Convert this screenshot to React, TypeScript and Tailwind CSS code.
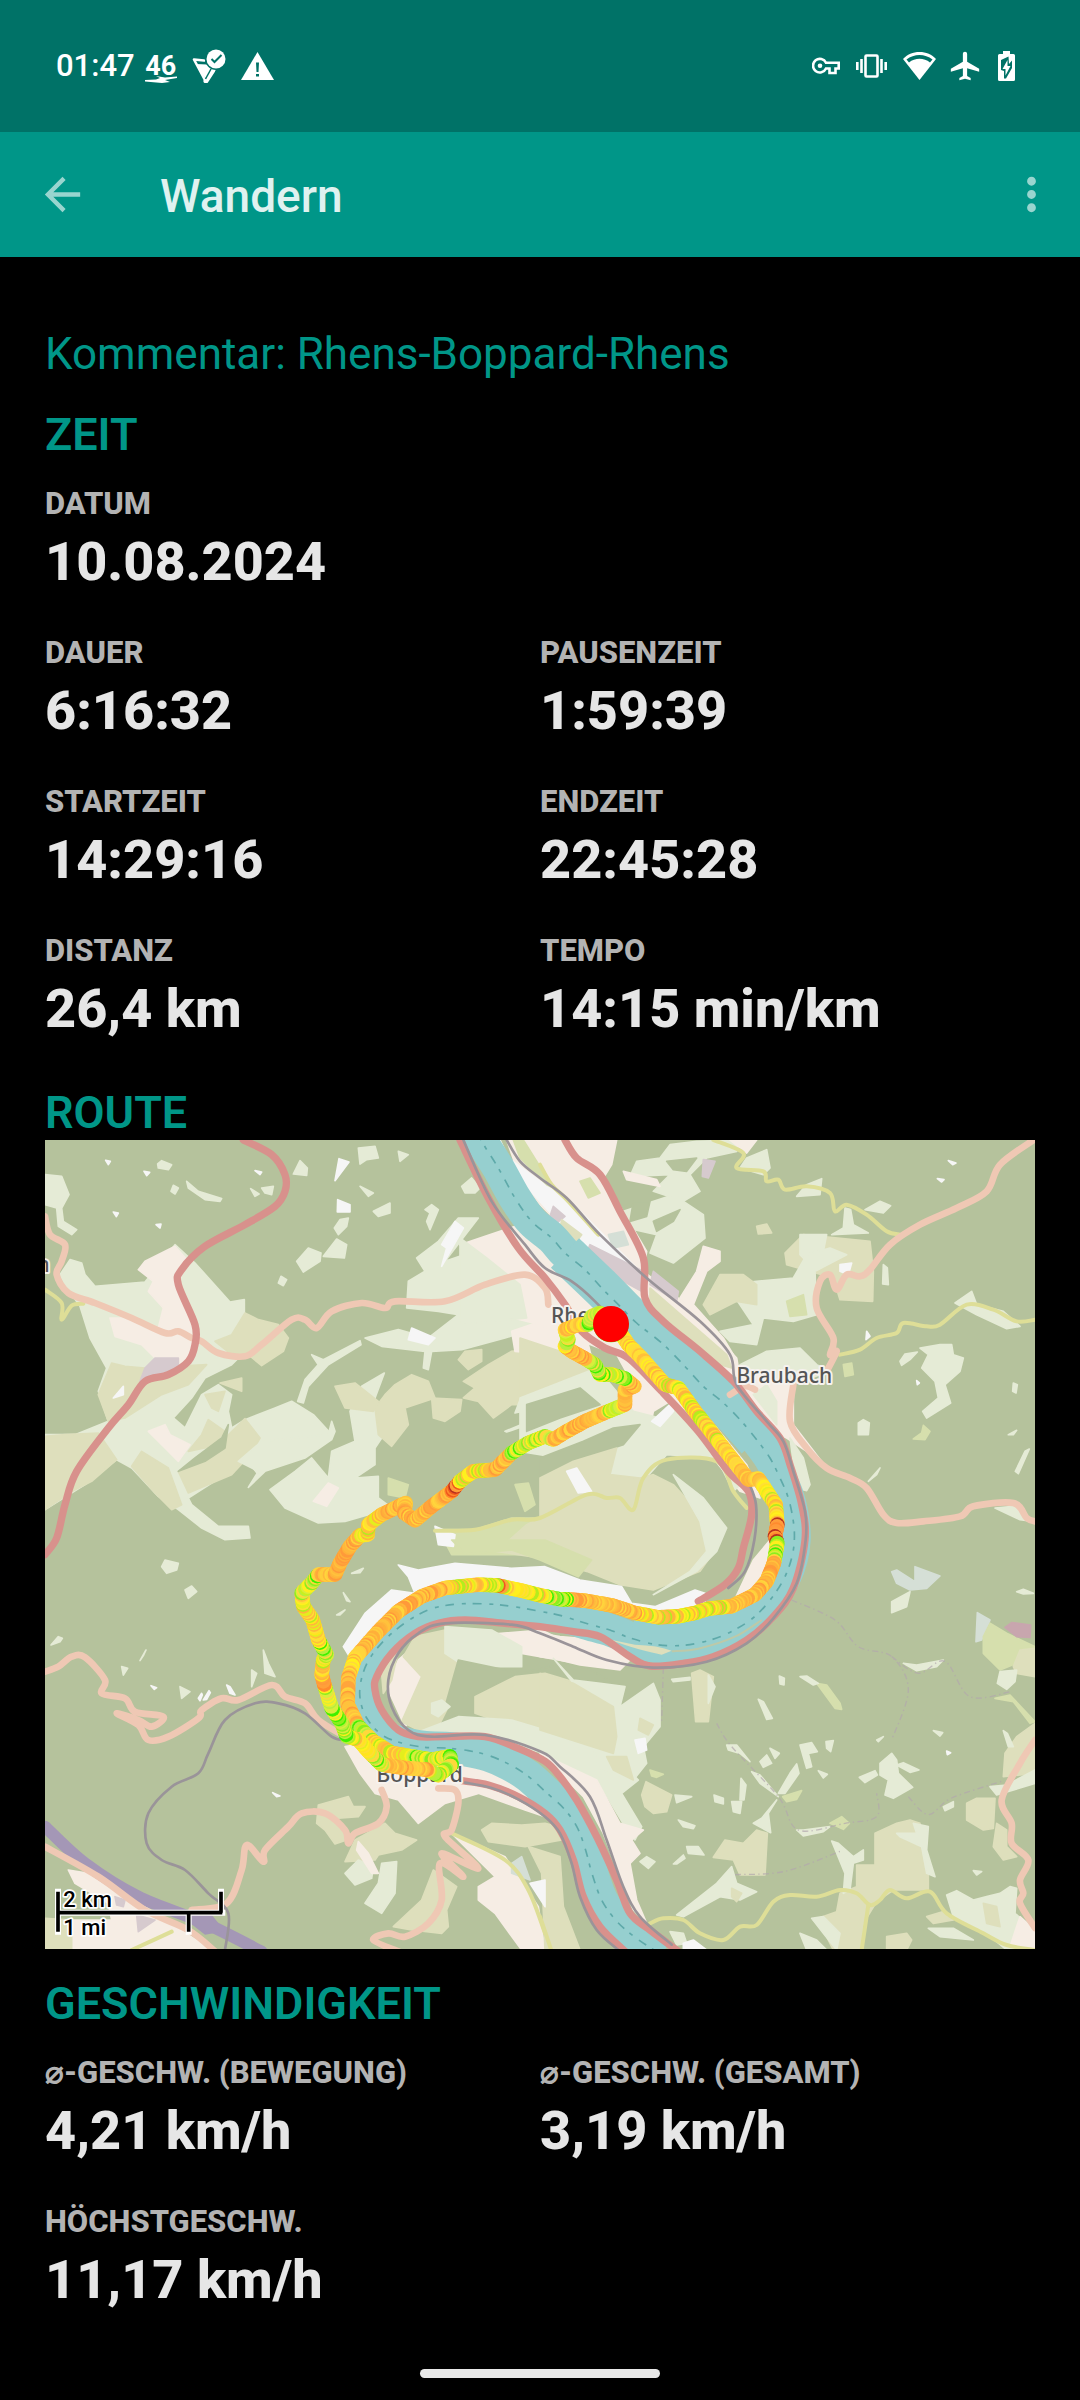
import React from "react";
import { MdArrowBack, MdMoreVert, MdAirplanemodeActive } from "react-icons/md";

type Pt = [number, number];

const toPoints = (s: string): Pt[] =>
  s.split(" ").map((p) => p.split(",").map(Number) as Pt);

// Catmull-Rom through the points, written as cubic beziers
const curve = (s: string) => {
  const p = toPoints(s);
  let d = `M${p[0][0]} ${p[0][1]}`;
  for (let i = 0; i < p.length - 1; i++) {
    const a = p[i - 1] || p[i];
    const b = p[i];
    const c = p[i + 1];
    const e = p[i + 2] || c;
    d += `C${b[0] + (c[0] - a[0]) / 6} ${b[1] + (c[1] - a[1]) / 6} ${c[0] - (e[0] - b[0]) / 6} ${c[1] - (e[1] - b[1]) / 6} ${c[0]} ${c[1]}`;
  }
  return d;
};

const COLORS = {
  grass: "#e5ebd6",
  farm: "#dedfbc",
  town: "#f6ede4",
  white: "#f6f6f6",
  industry: "#d6cace",
  meadow: "#d6dfad",
  pale: "#d5dfd6",
  forest: "#b5c29c",
  pink: "#c8a6ae",
};

type Area = [keyof typeof COLORS, string];
type Tile = { x: number; y: number; areas: Area[] };

const tiles: Tile[] = [
  {
    x: 0,
    y: 0,
    areas: [
      ["grass", "75,365 110,375 120,410 150,445 300,432 390,320 450,375 555,492 598,485 598,530 640,560 600,640 560,680 480,720 440,780 385,840 420,870 470,770 520,740 560,770 550,820 560,870 600,845 690,810 740,790 805,830 860,890 820,920 700,970 640,1010 600,960 540,1010 430,1080 440,1100 520,1165 610,1165 615,1200 540,1205 470,1170 400,1115 340,1075 260,990 215,965 120,1040 0,1115 0,890 90,890 190,850 160,760 185,690 135,600 105,505 60,440 45,410"],
      ["farm", "0,895 60,890 160,885 215,965 140,1030 90,1055 0,1115"],
      ["farm", "200,675 240,685 300,690 485,680 430,740 350,770 240,840 190,850 160,770"],
      ["farm", "600,842 645,900 620,945 560,1010 430,1065 400,1000 480,950 540,900"],
      ["farm", "490,845 540,880 500,925 430,940 470,890"],
      ["farm", "290,940 370,990 410,1100 380,1115 330,1065 260,985"],
      ["farm", "600,525 640,545 700,560 730,600 715,640 650,683 610,650 560,650 510,610 560,590"],
      ["farm", "480,770 540,760 520,820 500,810"],
      ["farm", "525,735 590,720 590,760"],
      ["forest", "400,1000 450,960 530,900 550,860 540,930 480,970"],
      ["town", "280,395 300,370 390,325 430,370 400,430 440,560 440,640 410,690 330,660 290,620 210,595 195,540 240,540 340,570 355,510 310,460 325,430"],
      ["town", "310,880 360,860 375,890 435,920 400,970 360,930"],
      ["industry", "330,660 400,660 400,700 330,720 285,730 300,690"],
      ["grass", "950,745 1018,705 990,780 1010,900 990,930 990,980 930,1020 1000,1015 1000,1080 1040,1110 900,1150 820,1155 720,1110 675,1055 750,1000 800,960 850,1020 860,940 930,910 915,820"],
      ["town", "850,1035 880,1050 845,1105 805,1090"],
      ["farm", "870,745 930,735 1000,790 985,820 900,810"],
      ["farm", "1050,740 1100,710 1150,730 1170,780 1080,810 1090,860 1040,925 1000,890 990,810 1020,770"],
      ["farm", "1160,780 1250,785 1245,820 1200,850 1165,840"],
      ["farm", "1255,730 1330,680 1400,640 1620,610 1640,690 1500,800 1400,800 1345,840 1300,790 1255,780 1290,750"],
      ["farm", "1240,665 1260,640 1310,635 1310,670 1270,695"],
      ["grass", "1450,720 1640,680 1560,790 1410,825"],
      ["grass", "1115,360 1180,310 1240,240 1300,240 1200,370 1310,332 1390,380 1500,440 1500,560 1380,600 1250,635 1160,640 1150,695 1135,690 1140,640 1010,625 960,600 1060,575 1150,600 1240,530 1180,520 1085,510 1090,430 1140,400"],
      ["farm", "1250,460 1330,400 1360,390 1360,430 1280,465"],
      ["white", "1190,320 1230,250 1255,270 1190,385 1205,330"],
      ["white", "1100,570 1170,600 1150,620 1090,605"],
      ["town", "1400,580 1500,545 1620,580 1640,660 1540,650 1410,640"],
      ["grass", "0,110 50,115 72,170 50,210 55,250 95,275 80,290 40,265 35,210 0,200"],
      ["grass", "940,30 990,25 1000,60 965,65 945,78"],
      ["grass", "765,68 787,90 785,112 745,108"],
      ["grass", "985,220 1035,195 1035,225 1000,235"],
      ["grass", "885,245 910,240 905,265 880,290 868,270"],
      ["grass", "875,303 905,320 898,360 835,355"],
      ["grass", "790,330 828,345 825,370 775,402 755,370"],
      ["grass", "425,130 460,160 530,182 525,190 480,185 430,150"],
      ["grass", "338,78 350,68 380,80 370,95 340,90"],
      ["grass", "1250,145 1280,120 1305,150 1290,165 1260,165"],
      ["grass", "945,145 985,165 970,175"],
      ["grass", "1060,40 1090,50 1065,70"],
      ["grass", "650,150 685,145 680,170 660,165"],
      ["grass", "617,152 642,168 630,175"],
      ["grass", "1345,295 1375,300 1415,360 1390,370 1340,310"],
      ["grass", "1160,200 1180,215 1155,275 1145,250 1155,225 1140,215"],
      ["grass", "708,415 725,425 715,443 700,435"],
      ["grass", "385,142 400,150 390,168 378,160"],
      ["grass", "800,650 835,665 945,608 948,620 850,680 790,745 775,795 758,790 780,725 820,680"],
      ["grass", "1380,880 1500,830 1500,842 1385,882"],
      ["grass", "580,970 650,910 850,890 860,850 870,880 860,905 780,960 660,1000 610,1048 640,1000"],
      ["white", "882,62 912,72 870,128"],
      ["white", "878,185 915,200 915,222 877,222"],
      ["white", "182,67 196,70 190,80"],
      ["white", "297,100 314,103 305,113"],
      ["white", "630,98 650,102 645,110"],
      ["white", "333,260 348,258 345,270"],
      ["white", "205,222 220,225 214,236"],
      ["white", "235,745 235,770 205,780"],
      ["meadow", "1030,1020 1090,1040 1080,1080 1030,1070"],
      ["meadow", "1180,1175 1290,1175 1400,1140 1640,1140 1640,1290 1480,1250 1220,1250"],
      ["meadow", "1410,1040 1450,1035 1470,1100 1440,1120"],
      ["white", "1170,1165 1230,1190 1225,1225 1180,1220"],
    ],
  },
  {
    x: 1485,
    y: 0,
    areas: [
      ["town", "-100,6 230,6 215,80 190,120 320,340 310,400 440,500 590,660 600,720 560,700 320,500 130,330 0,200 -60,120"],
      ["white", "-120,6 -95,60 0,130 100,200 300,400 280,420 110,310 0,190 -70,110"],
      ["meadow", "-80,6 -50,6 40,150 20,140 -60,60"],
      ["meadow", "120,130 150,120 180,165 145,180"],
      ["industry", "150,320 310,400 305,460 250,430 140,345"],
      ["industry", "340,400 415,460 410,490 330,440"],
      ["industry", "40,205 75,235 50,255 30,235"],
      ["farm", "65,245 125,290 110,310 60,275"],
      ["pale", "205,290 250,280 265,320 220,330"],
      ["farm", "330,450 560,650 575,690 540,680 330,500"],
      ["town", "-240,320 -60,260 0,330 140,450 280,580 440,760 620,980 660,1080 600,1060 430,850 390,790 340,820 330,870 260,860 280,740 230,650 100,600 0,560 -80,540"],
      ["grass", "-240,300 -160,360 -60,440 -40,540 -240,560"],
      ["farm", "-60,600 60,640 170,690 60,760 -60,780"],
      ["grass", "-60,780 170,690 280,820 360,840 400,790 620,1020 580,1060 530,960 380,950 300,1040 230,1070 140,1060 60,960 -60,940"],
      ["forest", "-40,800 120,750 180,800 60,840 -40,880"],
      ["forest", "0,960 130,910 220,870 300,860 250,920 100,970 0,1030"],
      ["white", "400,790 400,820 360,865 335,850"],
      ["farm", "0,1020 100,970 230,930 210,1010 300,1020 340,1010 400,1040 500,1150 530,1230 480,1300 340,1356 240,1340 140,1300 0,1260 -130,1240 -40,1160 0,1140"],
      ["white", "80,1000 110,990 155,1060 115,1065"],
      ["grass", "400,1010 490,1080 560,1170 530,1240 470,1300 340,1370 450,1300 500,1240 480,1150"],
      ["grass", "290,70 360,60 390,20 470,10 600,6 590,40 500,60 450,110 480,160 430,190 340,160 390,110 270,115"],
      ["grass", "250,220 400,170 490,230 495,300 400,375 330,345 350,290 260,270"],
      ["forest", "380,70 470,60 440,100 400,95"],
      ["forest", "280,190 330,190 320,235 270,250"],
      ["forest", "340,250 420,215 400,250 350,280"],
      ["grass", "620,60 680,35 690,90 670,110 600,90"],
      ["town", "250,100 350,125 360,145 260,125"],
      ["industry", "490,65 525,70 505,120 487,115"],
      ["town", "570,6 650,6 620,45"],
      ["farm", "735,345 790,290 990,310 1000,400 998,490 900,485 880,420 740,380"],
      ["grass", "780,290 860,290 850,340 800,370 780,350"],
      ["grass", "560,440 650,430 760,420 800,350 870,330 920,350 825,400 830,530 760,550 670,540 650,620 570,610 540,580 640,560"],
      ["meadow", "740,490 790,470 800,530 750,535"],
      ["town", "490,325 540,340 540,370 500,400 460,500 550,600 580,650 520,600 420,480 470,400"],
      ["farm", "540,410 610,410 650,440 650,500 590,490 510,530 490,500"],
      ["white", "900,380 935,375 925,410 900,400"],
      ["grass", "600,680 680,640 780,630 830,680 870,700 700,760 620,690"],
      ["town", "580,680 700,720 760,740 760,860 860,990 800,940 740,900 700,880 640,800"],
      ["grass", "640,770 680,740 710,790 710,860"],
      ["grass", "750,900 790,960 810,1040 800,1058 770,1050"],
      ["grass", "1140,630 1200,620 1235,620 1240,650 1270,660 1260,700 1215,740 1232,795 1160,840 1148,820 1195,780 1185,730 1145,690 1165,650"],
      ["grass", "1080,670 1095,648 1132,642 1110,665 1085,682"],
      ["grass", "955,855 970,845 988,855 985,890 955,890"],
      ["meadow", "1150,862 1170,880 1155,905 1120,903 1145,885"],
      ["grass", "1245,495 1295,460 1310,500 1390,520 1440,565 1400,572 1310,530"],
      ["grass", "975,215 1020,190 1052,203 1030,225"],
      ["grass", "800,140 845,122 840,170 770,175"],
      ["grass", "915,210 932,215 940,260 985,285 875,290 910,270"],
      ["grass", "1030,380 1042,390 1045,440 1028,438"],
      ["grass", "1455,940 1468,933 1435,1007 1426,1000"],
      ["grass", "1365,1110 1420,1105 1480,1150 1440,1145"],
      ["grass", "985,1030 1020,990 1010,1010"],
      ["grass", "1420,735 1432,740 1428,765 1418,760"],
      ["grass", "1405,890 1430,877 1420,890"],
      ["meadow", "910,680 935,675 940,710 915,715"],
      ["farm", "650,265 680,258 695,285 655,288"],
      ["white", "980,580 990,595 978,605"],
      ["white", "1225,68 1248,75 1238,80"],
      ["white", "1192,122 1212,125 1205,132"],
      ["white", "1130,728 1138,735 1132,740"],
    ],
  },
  {
    x: 0,
    y: 1206,
    areas: [
      ["meadow", "1220,0 1500,0 1640,60 1600,110 1485,60 1400,30 1260,42"],
      ["white", "1060,75 1120,90 1230,70 1400,85 1500,80 1605,120 1730,140 1760,190 1830,200 1950,150 1980,160 1980,220 1500,200 1200,170 1000,310 920,360 895,320 960,220 1040,150 1110,160 1090,110"],
      ["town", "1025,440 1060,360 1130,300 1490,270 1720,385 1600,370 1430,340 1200,420 1080,560"],
      ["farm", "1110,290 1200,270 1250,350 1240,440 1180,560 1130,575 1070,545 1130,410 1075,350"],
      ["grass", "1200,260 1340,270 1430,320 1430,380 1260,380 1200,340"],
      ["farm", "1010,400 1060,330 1040,420 1015,460"],
      ["forest", "1240,360 1430,400 1560,370 1640,390 1720,440 1600,430 1410,400 1290,470 1290,520 1400,540 1240,535 1200,500"],
      ["farm", "1290,470 1410,410 1500,400 1600,430 1700,500 1715,600 1690,650 1500,590 1290,520"],
      ["grass", "1160,490 1190,480 1215,500 1180,530 1160,520"],
      ["grass", "1110,580 1240,530 1400,540 1500,570 1700,640 1780,720 1730,760 1790,860 1770,900 1740,860 1680,760 1500,640 1300,590"],
      ["town", "900,620 960,610 1040,640 1240,650 1390,690 1500,790 1500,830 1440,810 1300,760 1200,790 1120,850 1060,780 990,760 945,700"],
      ["grass", "1010,970 1055,965 1050,1060 1010,1120 960,1090 1000,1030"],
      ["farm", "820,795 910,770 925,800 960,800 940,830 870,835 900,870 905,900 870,912 840,870 815,850"],
      ["farm", "930,900 1020,850 1050,880 1115,900 1070,930 1000,945 990,960 900,965"],
      ["grass", "900,1000 940,960 985,980 980,1015 930,1035"],
      ["town", "940,905 970,940 1000,1000 980,1000 935,930"],
      ["farm", "1165,990 1235,1040 1205,1110 1210,1160 1190,1180 1100,1170 1045,1160 1130,1080"],
      ["town", "1220,880 1380,950 1480,1100 1500,1230 1430,1230 1350,1120 1300,1080 1300,1040 1350,1010 1320,980"],
      ["farm", "1310,870 1340,850 1430,855 1500,850 1620,880 1550,900 1440,920 1330,905"],
      ["pale", "1400,970 1430,950 1455,1020 1400,1000"],
      ["farm", "1450,920 1545,950 1555,1100 1605,1230 1500,1230 1490,1000"],
      ["white", "1455,1030 1500,1020 1500,1100"],
      ["town", "70,990 130,1000 300,1100 500,1230 0,1230 0,1140 200,1140 190,1090 90,1030"],
      ["farm", "0,1135 80,1140 80,1230 0,1230"],
      ["industry", "210,1070 240,1080 235,1100 215,1095"],
      ["industry", "275,1125 330,1140 280,1175"],
      ["grass", "360,60 400,70 395,90 365,100 350,80"],
      ["grass", "420,150 440,138 455,155 430,175"],
      ["grass", "18,315 40,290 52,295 45,305"],
      ["grass", "405,440 435,455 410,475"],
      ["grass", "230,380 248,385 235,405"],
      ["grass", "655,330 670,370 690,410 660,400"],
      ["grass", "620,390 635,400 620,440"],
      ["grass", "895,158 915,185 905,182"],
      ["grass", "920,100 955,85 945,98"],
      ["grass", "875,225 900,210 885,225"],
      ["grass", "285,362 303,330 296,345"],
      ["white", "545,435 555,440 570,465 555,460"],
      ["white", "460,475 470,460 472,465 465,482"],
      ["white", "475,480 492,452 496,458 485,478"],
      ["white", "683,758 705,768 695,770"],
      ["white", "318,437 335,443 328,448"],
    ],
  },
  {
    x: 1485,
    y: 1206,
    areas: [
      ["town", "560,230 640,60 690,0 700,60 640,170 540,215"],
      ["town", "0,280 60,290 180,300 270,360 240,390 120,375 40,355 0,350"],
      ["grass", "40,355 100,420 180,430 255,440 240,500 340,430 360,480 360,560 310,620 320,670 280,720 180,690 100,430"],
      ["farm", "0,400 100,430 220,500 230,590 220,640 0,570"],
      ["farm", "200,650 260,650 280,720 220,690"],
      ["farm", "300,535 340,555 325,585 295,570"],
      ["white", "285,600 315,595 320,630 295,640"],
      ["town", "0,640 170,720 240,850 310,870 275,900 300,940 270,970 290,1080 320,1150 280,1110 190,880 130,770"],
      ["pale", "1055,95 1070,90 1125,125 1125,80 1200,108 1160,145 1110,150 1070,130"],
      ["grass", "1055,185 1110,155 1100,200 1055,218"],
      ["grass", "1030,590 1010,600 1015,605"],
      ["pale", "1312,218 1350,240 1325,300 1308,305"],
      ["meadow", "1350,250 1400,280 1485,320 1430,370 1380,390 1330,340 1330,290"],
      ["pink", "1395,262 1415,248 1472,255 1470,292 1430,290"],
      ["farm", "1440,330 1485,325 1485,410 1430,400 1420,380"],
      ["grass", "1380,395 1430,390 1425,425 1400,448 1372,430"],
      ["meadow", "1365,475 1410,465 1485,545 1470,550 1420,485"],
      ["meadow", "830,430 860,435 900,490 905,508 885,505"],
      ["grass", "780,410 800,408 835,430 820,435"],
      ["grass", "655,478 670,485 697,535 680,538"],
      ["grass", "718,408 733,415 732,435 720,432"],
      ["farm", "455,400 480,390 520,410 505,545 467,545"],
      ["grass", "505,405 525,440 505,490"],
      ["grass", "395,418 450,412 450,420 400,425"],
      ["grass", "560,615 590,615 630,665 600,640 565,630"],
      ["grass", "780,615 815,608 832,635 805,640 815,680 800,685 790,650"],
      ["grass", "858,605 880,602 872,635 860,625"],
      ["grass", "690,625 718,640 705,655"],
      ["grass", "660,665 680,645 695,670 670,682"],
      ["grass", "770,672 777,700 735,760 715,760 750,700"],
      ["grass", "635,695 660,705 715,770 660,730"],
      ["grass", "1020,670 1055,640 1070,660 1075,700 1118,742 1060,775 1035,765 1045,720 1020,705"],
      ["grass", "1070,675 1090,668 1137,690 1110,697"],
      ["grass", "958,712 1005,692 1012,705 975,728"],
      ["grass", "835,692 862,703 850,714"],
      ["meadow", "728,770 785,752 770,778 740,785"],
      ["meadow", "330,690 370,703 350,712 335,708"],
      ["farm", "318,725 395,765 380,815 340,820 315,800 305,765"],
      ["grass", "405,765 455,770 410,788"],
      ["grass", "522,765 550,775 550,792 525,785"],
      ["grass", "575,785 605,785 600,820 580,815"],
      ["grass", "603,715 618,735 612,780 600,780"],
      ["grass", "710,780 685,820 692,878 640,850 665,835"],
      ["grass", "415,840 465,857 460,866 430,860"],
      ["farm", "555,900 610,910 650,870 682,880 675,1005 600,1005 580,960 520,952"],
      ["grass", "440,920 475,920 492,945 445,940"],
      ["grass", "400,972 430,945 435,955 410,972"],
      ["grass", "300,965 320,950 345,965 325,985"],
      ["grass", "575,980 590,1030 650,1055 600,1080 540,1070 430,1130 410,1125 530,1030"],
      ["farm", "575,1045 605,1060 590,1085 575,1070"],
      ["farm", "1005,880 1070,850 1110,840 1140,850 1130,900 1165,960 1165,1050 1060,1050 1010,1085 970,1150 960,1230 880,1230 850,1170 820,1140 890,1115 900,1060 950,1040 950,975 1005,975"],
      ["grass", "1120,850 1165,860 1160,930 1185,1010 1160,1000 1145,920 1080,890 1070,880 1130,880"],
      ["grass", "875,903 895,910 940,950 970,930 970,960 940,970 930,1050 910,1060 915,1000"],
      ["grass", "770,870 790,870 870,860 850,875 790,888"],
      ["meadow", "870,850 905,830 928,850 910,868"],
      ["grass", "815,1135 850,1130 900,1180 890,1230 850,1180"],
      ["grass", "780,1180 830,1200 860,1230 800,1230"],
      ["farm", "1040,1190 1100,1180 1115,1200 1100,1230 1040,1230"],
      ["grass", "390,1175 430,1180 440,1210 410,1215"],
      ["white", "430,1210 460,1200 500,1230 430,1230"],
      ["farm", "1280,790 1310,775 1365,775 1360,865 1330,870 1280,840"],
      ["farm", "1370,850 1400,870 1400,920 1430,950 1390,960 1360,920"],
      ["farm", "1485,550 1485,700 1390,710 1395,640 1430,590"],
      ["grass", "1350,740 1400,735 1485,690 1485,730 1370,765"],
      ["grass", "1210,800 1240,785 1240,800 1215,812"],
      ["grass", "1220,1065 1250,1052 1300,1080 1340,1070 1380,1060 1410,1040 1430,1045 1425,1120 1485,1175 1485,1230 1400,1230 1340,1180 1240,1130"],
      ["farm", "1160,1130 1210,1115 1240,1140 1180,1150"],
      ["grass", "1165,1165 1240,1165 1300,1200 1200,1190"],
      ["farm", "1330,1090 1370,1100 1380,1160 1340,1150"],
      ["town", "1440,1130 1485,1170 1485,1230 1410,1220"],
      ["grass", "1090,370 1130,375 1210,360 1190,380 1130,392"],
      ["grass", "1430,155 1450,148 1480,160 1450,162"],
      ["grass", "1180,572 1208,578 1200,588"],
      ["grass", "1390,572 1402,580 1420,620 1405,620"],
      ["white", "1220,633 1232,638 1222,644"],
      ["grass", "1300,992 1325,995 1310,1005"],
    ],
  },
];

const RIVER =
  "1260,-90 1308,6 1360,90 1410,180 1460,250 1520,300 1560,345 1620,395 1670,450 1720,500 1775,555 1850,615 1915,680 1975,745 2030,790 2085,845 2135,905 2175,960 2205,1020 2230,1080 2245,1150 2248,1206 2240,1260 2218,1320 2180,1380 2130,1435 2070,1475 2000,1505 1915,1522 1835,1520 1755,1500 1700,1478 1620,1455 1545,1432 1485,1420 1400,1405 1330,1398 1240,1398 1160,1412 1090,1448 1025,1500 975,1560 950,1620 945,1680 965,1740 1010,1790 1070,1815 1140,1828 1200,1830 1270,1838 1330,1852 1395,1880 1450,1915 1500,1960 1555,2010 1595,2065 1620,2130 1642,2210 1672,2290 1720,2355 1780,2405 1850,2450";

const primary = [
  "595,6 680,50 720,110 720,160 690,205 600,260 480,325 410,395 400,440 450,560 450,620 430,670 370,710 300,730 250,800 190,870 95,1000 60,1100 35,1200 0,1250",
  "1245,6 1330,180 1420,330 1500,420 1560,500 1610,580 1680,630 1750,660 1850,760 1960,880 2050,1000 2110,1060 2120,1130 2095,1230 2080,1290 2040,1340 1960,1390",
  "1560,6 1595,60 1665,110 1725,220 1795,360 1800,480 1855,550 1965,640 2065,730 2135,820 2205,900 2235,980 2270,1100 2280,1206 2245,1350 2185,1436 2105,1506 2005,1556 1915,1576 1815,1584 1755,1556 1665,1496 1585,1481 1485,1466 1380,1456 1260,1446 1180,1456 1110,1486 1040,1546 995,1616 990,1656 1010,1716 1060,1776 1120,1796 1200,1796 1320,1796 1420,1831 1500,1870 1545,1916 1595,1986 1655,2096 1715,2226 1755,2326 1815,2376 1900,2440",
  "1250,1928 1330,1941 1420,1976 1500,2026 1545,2076 1585,2166 1615,2276 1665,2366 1740,2440",
];

const secondary = [
  "0,235 15,290 60,320 50,370 35,410 70,465 150,495 260,540 360,585 400,580 440,600 470,610 520,645 600,655 650,620 740,545 780,545 815,570 860,520 950,495 1020,510 1050,490 1200,490 1320,440 1440,410 1500,450 1510,500",
  "2965,6 2865,80 2825,160 2735,210 2625,260 2535,320 2475,395 2445,415 2405,410 2375,455 2355,410 2325,430 2315,510 2365,600 2355,650 2375,640 2345,700",
  "2245,740 2235,850 2285,930 2345,990 2415,1020 2465,1050 2515,1130 2555,1155 2635,1150 2745,1135 2785,1105 2905,1095 2945,1140 2970,1150",
  "0,1601 40,1586 80,1556 120,1558 180,1626 170,1666 240,1681 270,1721 355,1736 320,1766 280,1746 215,1726 280,1761 310,1806 370,1796 460,1741 470,1716 530,1681 580,1686 680,1641 720,1676 780,1696 820,1746 900,1796",
  "1010,1956 1025,2006 1000,2056 930,2086 910,2116 900,2076 840,2026 770,2026 730,2066 660,2136 655,2171 605,2121 590,2196 545,2296 440,2316",
  "1180,1951 1230,1956 1240,1996 1220,2076 1200,2096 1300,2191 1190,2146 1255,2216 1185,2176 1190,2286 1150,2356 1080,2396 1030,2386 985,2406 1060,2440",
  "0,2126 160,2216 300,2316 430,2376 510,2440",
  "2970,1806 2925,1876 2870,1986 2900,2056 2900,2116 2950,2166 2925,2226 2935,2266 2925,2296 2970,2370",
  "2055,770 2100,745 2130,755",
];

const tertiary = [
  "0,455 50,495 50,545 80,503 115,497",
  "2005,6 2095,45 2075,90 2155,100 2165,130 2200,125 2220,155 2285,145 2355,165 2370,220 2405,200 2465,230 2525,280 2565,290",
  "2385,650 2445,635 2495,600 2555,585 2575,555 2645,565 2685,560 2765,500 2845,515 2915,550 2970,545",
  "1170,1178 1290,1175 1400,1145 1485,1140 1625,1070 1685,1080 1725,1080 1765,1115 1795,1020 1865,965 2015,970 2065,1060 2105,1110",
  "1485,80 1520,140 1570,190 1660,290",
  "1220,2086 1380,2166 1450,2256 1500,2386",
  "260,2436 380,2381",
  "1815,2356 1855,2341 1915,2346 1965,2386 2035,2406 2085,2366 2135,2361 2185,2291 2235,2271 2315,2276 2385,2256 2435,2266 2475,2301 2505,2286 2535,2256 2585,2281 2655,2261 2705,2326 2815,2386 2885,2421 2970,2436",
  "2470,2301 2450,2436",
  "1485,2336 1520,2440",
];

const rails = [
  "1255,6 1340,190 1440,320 1500,390 1580,430 1650,490 1780,630 1850,750",
  "2110,1030 2133,1100 2128,1206 2100,1300 2050,1350",
  "1385,6 1425,70 1485,120 1565,180 1665,290 1805,420 1965,550 2055,650 2075,740 2165,850 2215,910 2245,1000 2280,1120 2282,1206 2255,1336 2185,1441 2105,1516 1985,1571 1825,1589 1685,1566 1585,1526 1485,1486 1400,1460 1200,1456 1120,1486 1060,1546 1030,1626 1040,1706 1090,1776 1160,1796 1320,1791 1485,1840 1545,1886 1635,1976 1685,2106 1735,2246 1785,2336 1880,2420",
  "900,1806 860,1796 780,1726 700,1696 630,1696 540,1746 490,1846 460,1906 380,1946 310,2026 305,2116 350,2166 420,2196 490,2266 550,2326 540,2436",
  "1260,1934 1340,1950 1420,1984 1500,2036 1545,2086 1580,2176 1605,2276 1655,2376 1725,2440",
];

const paths = [
  "2240,1386 2370,1446 2440,1526 2540,1556 2590,1656 2540,1806",
  "2540,1556 2620,1606 2700,1570 2775,1676 2900,1660",
  "2015,1756 2060,1826 2200,1976 2260,2076 2400,2056 2495,2036 2495,1966",
  "2070,2210 2220,2200 2385,2140",
  "2590,1976 2650,2030 2720,1980 2870,1930",
  "1860,590 2010,720",
  "1855,1590 1850,1750",
];

// pace along the recorded track: o = slow, y = normal, g = fast, m = mixed, r = almost standing
const track: [string, string][] = [
  ["y", "1720,575 1750,620 1790,660 1860,740"],
  ["m", "1860,740 1900,750 1950,820 1990,870 2020,910"],
  ["y", "2020,910 2055,955 2110,1025 2140,1022 2165,1060"],
  ["m", "2165,1060 2192,1100 2197,1160"],
  ["r", "2197,1160 2190,1195 2197,1215"],
  ["g", "2197,1215 2193,1240 2187,1275"],
  ["o", "2187,1275 2165,1330 2130,1370 2060,1405"],
  ["m", "2060,1405 1990,1412 1950,1425 1900,1435 1840,1438 1770,1425"],
  ["o", "1770,1425 1700,1402 1620,1388 1565,1384"],
  ["g", "1565,1384 1545,1384 1485,1372"],
  ["m", "1485,1372 1430,1358 1370,1345"],
  ["r", "1370,1345 1355,1342"],
  ["m", "1355,1342 1300,1340 1200,1350"],
  ["o", "1200,1350 1130,1375 1060,1420 1000,1480 930,1560"],
  ["y", "930,1560 910,1620"],
  ["o", "910,1620 908,1700 940,1765"],
  ["g", "940,1765 985,1810"],
  ["m", "985,1810 1040,1845 1100,1855"],
  ["g", "1100,1855 1160,1865 1215,1855 1220,1880 1180,1912 1145,1895"],
  ["o", "1145,1895 1080,1890 1010,1880"],
  ["g", "1010,1880 970,1840"],
  ["m", "970,1840 940,1805 905,1795"],
  ["g", "905,1795 890,1755 860,1710 838,1640"],
  ["r", "838,1640 830,1610"],
  ["m", "830,1610 835,1565 845,1550"],
  ["g", "845,1550 820,1505"],
  ["m", "820,1505 803,1445 775,1405 770,1365"],
  ["g", "770,1365 800,1335 820,1310"],
  ["o", "820,1310 870,1310 885,1275 915,1225 945,1192"],
  ["m", "945,1192 968,1190 970,1160 1010,1130"],
  ["o", "1010,1130 1082,1095 1078,1125 1110,1147 1160,1105 1220,1060"],
  ["r", "1220,1060 1245,1030"],
  ["m", "1245,1030 1285,1000 1350,995"],
  ["o", "1350,995 1400,945"],
  ["g", "1400,945 1450,915 1500,895 1525,905"],
  ["o", "1525,905 1560,883 1620,850 1690,820"],
  ["g", "1690,820 1740,800"],
  ["o", "1740,800 1740,755 1768,745 1740,722"],
  ["g", "1740,722 1700,710 1665,710 1650,680 1620,662"],
  ["o", "1620,662 1580,640 1560,625"],
  ["g", "1560,625 1570,605 1560,575"],
  ["y", "1560,575 1600,560 1630,560"],
  ["g", "1630,560 1640,535 1665,525 1690,540"],
];

const PALETTE: Record<string, string[]> = {
  y: ["#ffc83c", "#ffc03a", "#ffdf35", "#fff01e", "#ffb53c", "#ffd83c"],
  o: ["#ffb03a", "#ffa53c", "#ffc23c", "#ffd53c", "#ff9a3a", "#ffb83c", "#ffce3c"],
  g: ["#c8f01e", "#8cee1e", "#ffee1e", "#d8ee3c", "#3ef000", "#b8ee3c", "#ffd83c"],
  m: ["#ffe51e", "#ffc03a", "#ffb53c", "#e4ee1e", "#ffdf35", "#fff01e", "#b4ec1e"],
  r: ["#ff9a3a", "#f0581e", "#ffa03a", "#b8301e", "#ff8a2e"],
};

const dots = track.flatMap(([mode, pts]) => {
  const p = toPoints(pts);
  const out: { x: number; y: number; fill: string }[] = [];
  for (let i = 0; i < p.length - 1; i++) {
    const [ax, ay] = p[i];
    const [bx, by] = p[i + 1];
    const n = Math.max(1, Math.round(Math.hypot(bx - ax, by - ay) / 5));
    for (let k = 0; k < n; k++) {
      const x = ax + ((bx - ax) * k) / n;
      const y = ay + ((by - ay) * k) / n;
      const seed = Math.abs(Math.sin(x * 12.9898 + y * 78.233) * 43758.5453) % 1;
      const colors = PALETTE[mode];
      out.push({ x, y, fill: colors[Math.floor(seed * colors.length)] });
    }
  }
  return out;
});

const Lines = ({ items, color, width }: { items: string[]; color: string; width: number }) => (
  <g fill="none" stroke={color} strokeWidth={width} strokeLinecap="round" strokeLinejoin="round">
    {items.map((s) => (
      <path key={s} d={curve(s)} />
    ))}
  </g>
);

const SCALE_BAR = "M39 2261V2381M39 2324H532M528 2261V2324M431 2324V2381";

const RouteMap = () => (
  <svg
    viewBox="0 6 2970 2427"
    className="block w-full bg-[#b5c29c]"
    role="img"
    aria-label="Route"
  >
    {tiles.map((t, i) => (
      <g key={i} transform={`translate(${t.x} ${t.y})`}>
        {t.areas.map(([kind, pts]) => (
          <polygon
            key={pts}
            points={pts}
            fill={COLORS[kind]}
            stroke={COLORS[kind]}
            strokeWidth="5"
            strokeLinejoin="round"
          />
        ))}
      </g>
    ))}
    <g fill="none" stroke="#b3a8ae" strokeWidth="4" strokeDasharray="18 10 4 10" opacity="0.7">
      {paths.map((s) => (
        <path key={s} d={curve(s)} />
      ))}
    </g>
    <path d={curve(RIVER)} fill="none" stroke="#96cfcf" strokeWidth="98" />
    <path d={curve("1560,345 1670,450 1775,555 1915,680 2030,790 2135,905")} fill="none" stroke="#96cfcf" strokeWidth="122" />
    <path d={curve("2130,1425 2000,1490 1915,1510 1835,1515 1755,1495")} fill="none" stroke="#96cfcf" strokeWidth="120" />
    <path d={curve(RIVER)} fill="none" stroke="#5ea9a9" strokeWidth="5" strokeDasharray="26 20 12 24" />
    <path d="M1690 1504Q1790 1540 1850 1550L1880 1538Q1840 1522 1770 1520Z" fill="#dedfbc" />
    <path d={curve("1880,1540 1960,1532 2070,1496 2150,1446")} fill="none" stroke="#bdc9a8" strokeWidth="6" />
    <Lines items={["0,2066 120,2176 280,2276 480,2356 650,2441"]} color="#a497b6" width={36} />
    <path d="M390 2320L500 2330L540 2380L480 2390Z" fill="#a497b6" />
    <Lines items={tertiary} color="#dede97" width={12} />
    <Lines items={secondary} color="#efc8b4" width={20} />
    <Lines items={primary} color="#d8918c" width={22} />
    <Lines items={rails} color="#9a9499" width={8} />
    <g
      className="font-['Noto_Sans',sans-serif] font-medium"
      fontSize="63"
      fill="#555555"
      stroke="#f6f2ee"
      strokeWidth="12"
      strokeLinejoin="round"
      paintOrder="stroke"
    >
      <text x="14" y="402" textAnchor="end">n</text>
      <text x="1518" y="554">Rhens</text>
      <text x="2218" y="734" textAnchor="middle">Braubach</text>
      <text x="1124" y="1932" textAnchor="middle">Boppard</text>
    </g>
    {dots.map((d, i) => (
      <circle key={i} cx={d.x} cy={d.y} r="22" fill={d.fill} />
    ))}
    <circle cx="1698" cy="560" r="53" fill="#3ef000" />
    <circle cx="1698" cy="558" r="54" fill="#ff0000" />
    <path d={SCALE_BAR} fill="none" stroke="#ffffff" strokeWidth="18" strokeLinecap="square" />
    <path d={SCALE_BAR} fill="none" stroke="#000000" strokeWidth="11" />
    <g
      className="font-[Roboto,sans-serif] font-medium"
      fontSize="66"
      stroke="#ffffff"
      strokeWidth="10"
      strokeLinejoin="round"
      paintOrder="stroke"
    >
      <text x="55" y="2307">2 km</text>
      <text x="55" y="2391">1 mi</text>
    </g>
  </svg>
);

const StatusBar = () => (
  <div className="flex h-33 items-center justify-between bg-[#007267] px-14 text-white">
    <div className="flex items-center">
      <span className="text-[31px] leading-10 font-medium">01:47</span>
      <div className="ml-2.5 flex w-8 flex-col items-center pt-2">
        <span className="text-[27px] leading-5 font-bold">46</span>
        <svg className="h-2 w-8" viewBox="0 0 32 8" fill="currentColor">
          <path d="M11 0L20 1.500L32 0.500V2L20 4L25 6L17 7L0 5.500L0 4L11 3.500L15 2Z" />
        </svg>
      </div>
      <svg className="ml-[15px] size-[34px]" viewBox="0 0 34 34" fill="none">
        <path d="M12 11.500L2 10.500L13.500 32L23 20" stroke="#fff" strokeWidth="2.600" strokeLinejoin="round" strokeLinecap="round" />
        <path d="M4 15L15 15.500L21 20L13 29Z" fill="#fff" />
        <path d="M20.500 22L14 32" stroke="#fff" strokeWidth="5" strokeLinecap="round" />
        <path d="M19 20L13.500 30" stroke="#007267" strokeWidth="1.500" />
        <circle cx="24" cy="10" r="11" fill="#007267" />
        <circle cx="24" cy="10" r="9.500" fill="#fff" />
        <path d="M19.500 10L22.500 13L29.500 6" stroke="#007267" strokeWidth="2" />
      </svg>
      <svg className="ml-[15px] h-7 w-[33px]" viewBox="0 0 33 28">
        <path d="M16.500 0L33 28H0Z" fill="#fff" />
        <path d="M15 10.500H18L17.500 20H15.500ZM15 22H18V24.500H15Z" fill="#007267" />
      </svg>
    </div>
    <div className="flex items-center pr-[9px]">
      <svg className="h-[18px] w-7" viewBox="0 0 28 18" fill="none" stroke="#fff" strokeWidth="2.600">
        <path d="M14 5.800A6.800 6.800 0 1 0 14 11.500H17.500V16H23.500V11.500H26.700V5.800Z" />
        <circle cx="8" cy="8.700" r="2.300" fill="#fff" stroke="none" />
      </svg>
      <svg className="ml-4 h-6 w-[31px]" viewBox="0 0 31 24" fill="none" stroke="#fff" strokeWidth="2.600">
        <rect x="9.500" y="1.500" width="12" height="21" rx="1" />
        <path d="M5.500 5V19M1.300 8V16M25.500 5V19M29.700 8V16" />
      </svg>
      <svg className="ml-4 h-7 w-[33px]" viewBox="0 0 33 28">
        <path d="M16.500 0C10 0 4 2.500 0 7L16.500 28L33 7C29 2.500 23 0 16.500 0Z" fill="#fff" />
        <path d="M3.500 7.500C11 1.500 22 1.500 29.500 7.500L27 10.500C21 5.500 12 5.500 6 10.500Z" fill="#007267" />
      </svg>
      <MdAirplanemodeActive className="ml-3 size-[34px]" />
      <svg className="ml-4 h-[30px] w-[17px]" viewBox="0 0 17 30">
        <path d="M5 0H12V3H15.500Q17 3 17 4.500V28.500Q17 30 15.500 30H1.500Q0 30 0 28.500V4.500Q0 3 1.500 3H5Z" fill="#fff" />
        <path d="M10.500 5.500L3 9V19L6 20V27.500H8L14 17V9.500L11 13Z" fill="#007267" />
        <path d="M9.500 9L4.500 18H7.500V24.500L12.500 15H9.500Z" fill="#fff" />
      </svg>
    </div>
  </div>
);

const AppBar = () => (
  <header className="flex h-[125px] items-center bg-[#009688] pr-[22px] pl-9">
    <button aria-label="Zurück" className="text-[#99d5cf]">
      <MdArrowBack className="size-[53px]" />
    </button>
    <h1 className="ml-[71px] flex-1 pt-0.5 text-[46px] leading-[54px] font-medium text-[#e0f2f0]">Wandern</h1>
    <button aria-label="Mehr" className="text-[#99d5cf]">
      <MdMoreVert className="size-[53px]" />
    </button>
  </header>
);

const Heading = ({ children }: { children: React.ReactNode }) => (
  <h2 className="text-[45px] leading-[54px] font-semibold text-[#009688]">{children}</h2>
);

const Stat = ({ label, value }: { label: string; value: string }) => (
  <div className="font-extrabold">
    <dt className="text-[31px] leading-[46px] text-[#b3b3b3]">{label}</dt>
    <dd className="text-[54px] leading-[70px] text-[#e6e6e6]">{value}</dd>
  </div>
);

const App = () => {
  return (
    <div className="flex min-h-screen flex-col bg-black font-[Roboto,sans-serif]">
      <StatusBar />
      <AppBar />
      <main className="flex-1 px-[45px] pt-[70px]">
        <p className="text-[44px] leading-[54px] text-[#009688]">Kommentar: Rhens-Boppard-Rhens</p>

        <section className="mt-[27px]">
          <Heading>ZEIT</Heading>
          <dl className="mt-[19px] grid grid-cols-2 gap-y-[33px]">
            <div className="col-span-2">
              <Stat label="DATUM" value="10.08.2024" />
            </div>
            <Stat label="DAUER" value="6:16:32" />
            <Stat label="PAUSENZEIT" value="1:59:39" />
            <Stat label="STARTZEIT" value="14:29:16" />
            <Stat label="ENDZEIT" value="22:45:28" />
            <Stat label="DISTANZ" value="26,4 km" />
            <Stat label="TEMPO" value="14:15 min/km" />
          </dl>
        </section>

        <section className="mt-[42px]">
          <Heading>ROUTE</Heading>
          <RouteMap />
        </section>

        <section className="mt-[28px]">
          <Heading>GESCHWINDIGKEIT</Heading>
          <dl className="mt-[19px] grid grid-cols-2 gap-y-[33px]">
            <Stat label="⌀-GESCHW. (BEWEGUNG)" value="4,21 km/h" />
            <Stat label="⌀-GESCHW. (GESAMT)" value="3,19 km/h" />
            <Stat label="HÖCHSTGESCHW." value="11,17 km/h" />
          </dl>
        </section>
      </main>
      <div className="mx-auto mb-[22px] h-[9px] w-60 rounded-full bg-[#e8e8e8]" />
    </div>
  );
};

export default App;
